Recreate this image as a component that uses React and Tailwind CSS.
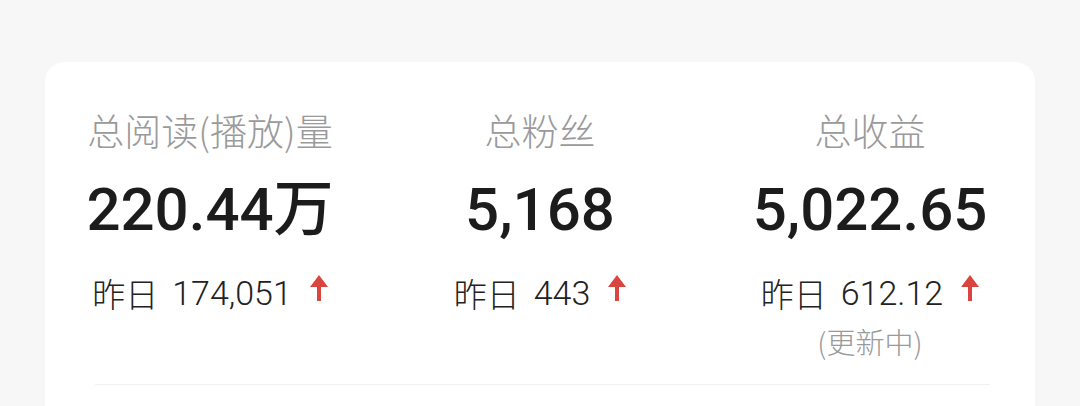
import React from "react";

const stats = [
  { title: "总阅读(播放)量", value: "220.44万", yesterday: "174,051" },
  { title: "总粉丝", value: "5,168", yesterday: "443" },
  { title: "总收益", value: "5,022.65", yesterday: "612.12", note: "(更新中)" },
];

const UpArrow = () => (
  <svg width="18" height="26" viewBox="0 0 18 26" className="ml-[18px] -mt-[10px]">
    <path d="M9 0 L18 12 L11 12 L11 26 L7 26 L7 12 L0 12 Z" fill="#d9453f" />
  </svg>
);

const StatCol = ({ stat }) => (
  <div className="flex flex-col items-center">
    <div className="text-[37px] leading-[48px] font-light text-[#9a9a9a]">{stat.title}</div>
    <div className="mt-[26px] text-[60px] leading-[60px] font-medium text-[#1c1c1c] font-['Roboto','Noto_Sans_CJK_SC',sans-serif]">
      {stat.value}
    </div>
    <div className="mt-[30px] flex items-center text-[33px] leading-[46px] text-[#222] font-light">
      <span>昨日</span>
      <span className="ml-[14px] text-[34px] font-['Roboto','Noto_Sans_CJK_SC',sans-serif] font-light">
        {stat.yesterday}
      </span>
      <UpArrow />
    </div>
    {stat.note && (
      <div className="mt-[5px] text-[29px] leading-[40px] font-light text-[#9a9a9a]">{stat.note}</div>
    )}
  </div>
);

export default function App() {
  return (
    <div className="h-[406px] overflow-hidden bg-[#f7f7f7] pt-[62px] px-[45px] font-['Noto_Sans_CJK_SC',sans-serif]">
      <div className="bg-white rounded-[20px] h-[400px] pt-[44px]">
        <div className="grid grid-cols-3 items-start">
          {stats.map((s) => (
            <StatCol key={s.title} stat={s} />
          ))}
        </div>
        <div className="mt-[23px] ml-[50px] mr-[45px] h-px bg-[#f1f1f1]" />
      </div>
    </div>
  );
}
